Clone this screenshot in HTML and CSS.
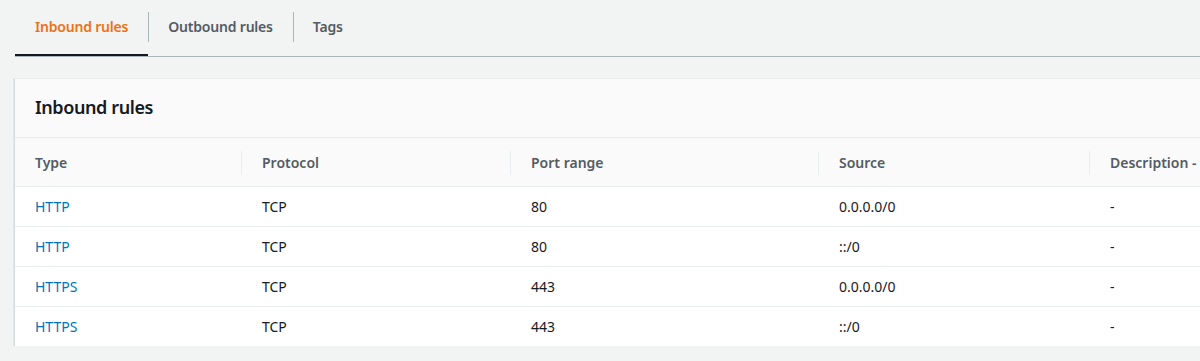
FILE: index.html
```html
<!DOCTYPE html>
<html>
<head>
    <title>Security group</title>
    <link rel="stylesheet" href="styles.css">
</head>
<body>
    <div class="tabs">
        <div class="tab active"><span>Inbound rules</span></div>
        <div class="tab"><span>Outbound rules</span></div>
        <div class="tab"><span>Tags</span></div>
    </div>

    <div class="panel">
        <div class="panel-header">
            <h2>Inbound rules</h2>
        </div>
        <table class="rules">
            <thead>
                <tr>
                    <th class="col-type"><span>Type</span></th>
                    <th class="col-protocol"><span>Protocol</span></th>
                    <th class="col-port"><span>Port range</span></th>
                    <th class="col-source"><span>Source</span></th>
                    <th class="col-desc"><span>Description - optional</span></th>
                </tr>
            </thead>
            <tbody>
                <tr>
                    <td><a href="#">HTTP</a></td>
                    <td>TCP</td>
                    <td>80</td>
                    <td>0.0.0.0/0</td>
                    <td>-</td>
                </tr>
                <tr>
                    <td><a href="#">HTTP</a></td>
                    <td>TCP</td>
                    <td>80</td>
                    <td>::/0</td>
                    <td>-</td>
                </tr>
                <tr>
                    <td><a href="#">HTTPS</a></td>
                    <td>TCP</td>
                    <td>443</td>
                    <td>0.0.0.0/0</td>
                    <td>-</td>
                </tr>
                <tr>
                    <td><a href="#">HTTPS</a></td>
                    <td>TCP</td>
                    <td>443</td>
                    <td>::/0</td>
                    <td>-</td>
                </tr>
            </tbody>
        </table>
    </div>
</body>
</html>
```

FILE: styles.css
```css
body {
    margin: 0;
    background-color: #f2f3f3;
    font-family: "Noto Sans", "Open Sans", Arial, sans-serif;
    color: #16191f;
    overflow: hidden;
}
.tabs {
    display: flex;
    height: 56px;
    margin-left: 15px;
    border-bottom: 1px solid #aab7b8;
}
.tab {
    display: flex;
    align-items: center;
    padding: 0 20px;
    font-size: 14px;
    font-weight: 600;
    letter-spacing: -0.2px;
    color: #545b64;
    position: relative;
}
.tab span {
    margin-top: -3px;
}
.tab + .tab::before {
    content: "";
    position: absolute;
    left: 0;
    top: 12px;
    height: 30px;
    border-left: 1px solid #aab7b8;
}
.tab.active {
    color: #ec7211;
    box-shadow: inset 0 -2px 0 #16191f;
}
.panel {
    width: 1300px;
    margin: 21px 0 0 14px;
    background-color: #ffffff;
    border-left: 1px solid #d5dbdb;
    border-top: 1px solid #eaeded;
    box-shadow: 0 1px 1px rgba(0, 28, 36, 0.3);
}
.panel-header {
    height: 58px;
    display: flex;
    align-items: center;
    padding: 0 20px;
    background-color: #fafafa;
    border-bottom: 1px solid #eaeded;
}
.panel-header h2 {
    margin: -2px 0 0;
    font-size: 18px;
    font-weight: 600;
    letter-spacing: -0.4px;
}
.rules {
    width: 100%;
    border-collapse: collapse;
    font-size: 14px;
}
.rules th {
    height: 47px;
    padding: 1px 0 0;
    text-align: left;
    font-weight: 600;
    color: #545b64;
    background-color: #fafafa;
    border-bottom: 1px solid #eaeded;
}
.rules th span {
    display: block;
    padding: 0 20px;
    line-height: 24px;
}
.rules th + th span {
    border-left: 1px solid #eaeded;
}
.col-type { width: 226px; }
.col-protocol { width: 269px; }
.col-port { width: 308px; }
.col-source { width: 271px; }
.rules td {
    height: 39px;
    padding: 0 20px;
    border-bottom: 1px solid #eaeded;
}
.rules tr:last-child td {
    border-bottom: none;
}
.rules td + td {
    padding-left: 21px;
}
.rules a {
    color: #0073bb;
    text-decoration: none;
}
```
